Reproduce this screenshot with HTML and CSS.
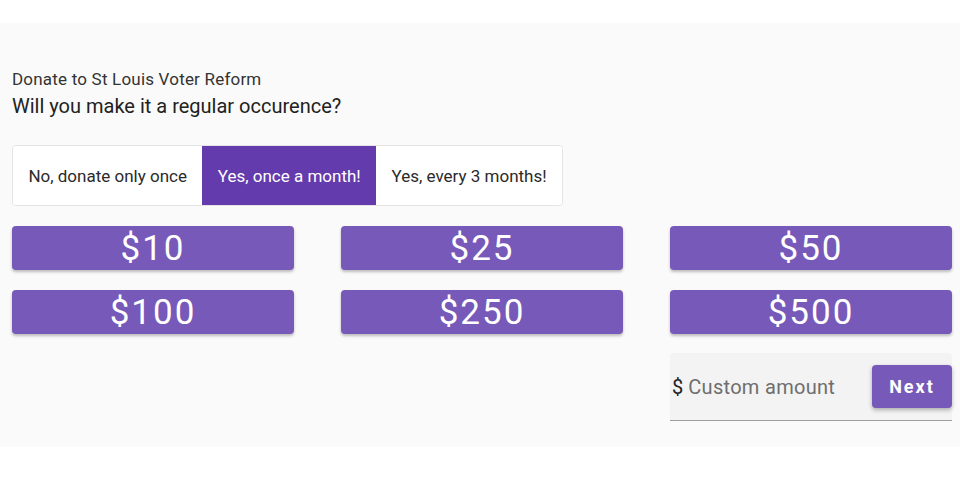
FILE: index.html
```html
<!DOCTYPE html>
<html lang="en">
<head>
    <meta charset="UTF-8">
    <meta name="viewport" content="width=device-width, initial-scale=1.0">
    <title>Donate</title>
    <link rel="stylesheet" href="styles.css">
</head>
<body>
    <div class="top-gap"></div>

    <section class="donate">
        <p class="donate-title">Donate to St Louis Voter Reform</p>
        <h2 class="donate-question">Will you make it a regular occurence?</h2>

        <!-- Frequency toggle -->
        <div class="toggle-group">
            <button class="toggle">No, donate only once</button>
            <button class="toggle selected">Yes, once a month!</button>
            <button class="toggle">Yes, every 3 months!</button>
        </div>

        <!-- Preset amounts -->
        <div class="amounts">
            <button class="amount">$10</button>
            <button class="amount">$25</button>
            <button class="amount">$50</button>
            <button class="amount">$100</button>
            <button class="amount">$250</button>
            <button class="amount">$500</button>
        </div>

        <div class="custom-row">
            <div class="custom-field">
                <span class="prefix">$</span>
                <input type="text" class="custom-input" placeholder="Custom amount">
                <button class="next-btn">Next</button>
            </div>
        </div>
    </section>
</body>
</html>
```

FILE: styles.css
```css
/* General page styles */
body {
    font-family: Roboto, "Liberation Sans", sans-serif;
    background-color: #fff;
    margin: 0;
    color: #222;
}

.top-gap {
    height: 23px;
}

.donate {
    background-color: #fafafa;
    padding: 44px 8px 26px 12px;
}

.donate-title {
    margin: 0;
    font-size: 17px;
    line-height: 24px;
    color: #333;
    letter-spacing: 0.2px;
}

.donate-question {
    margin: 1px 0 0;
    font-size: 20px;
    font-weight: 400;
    line-height: 28px;
    color: #222;
}

/* Toggle group */
.toggle-group {
    display: inline-flex;
    margin-top: 25px;
    border: 1px solid #e4e4e4;
    border-radius: 4px;
    background: #fff;
    overflow: hidden;
}

.toggle {
    font-family: inherit;
    font-size: 17px;
    color: #2a2a2a;
    background: #fff;
    border: none;
    height: 59px;
    padding: 0 15.4px;
    cursor: pointer;
}

.toggle.selected {
    background-color: #643bad;
    color: #fff;
}

/* Amount buttons */
.amounts {
    display: grid;
    grid-template-columns: repeat(3, minmax(0, 1fr));
    column-gap: 47px;
    row-gap: 20px;
    margin-top: 20px;
}

.amount {
    height: 44px;
    font-family: inherit;
    font-size: 35px;
    letter-spacing: 2px;
    color: #fff;
    background-color: #7759b9;
    border: none;
    border-radius: 4px;
    box-shadow: 0 2px 3px rgba(0, 0, 0, 0.25);
    cursor: pointer;
    padding: 0;
}

/* Custom amount */
.custom-row {
    display: grid;
    grid-template-columns: repeat(3, minmax(0, 1fr));
    column-gap: 47px;
    margin-top: 19px;
}

.custom-field {
    grid-column: 3;
    display: flex;
    align-items: center;
    height: 67px;
    background-color: #f3f3f3;
    border-bottom: 1px solid #9e9e9e;
    border-radius: 4px 4px 0 0;
}

.prefix {
    font-size: 20px;
    color: #222;
    padding-left: 2px;
}

.custom-input {
    flex: 1;
    min-width: 0;
    font-family: inherit;
    font-size: 20px;
    border: none;
    background: transparent;
    padding: 0 0 0 5px;
    outline: none;
    letter-spacing: 0.3px;
}

.custom-input::placeholder {
    color: #6e6e6e;
}

.next-btn {
    width: 80px;
    height: 43px;
    font-family: inherit;
    font-size: 18px;
    font-weight: 700;
    letter-spacing: 2px;
    color: #fff;
    background-color: #7759b9;
    border: none;
    border-radius: 4px;
    box-shadow: 0 2px 4px rgba(0, 0, 0, 0.3);
    cursor: pointer;
}
```
